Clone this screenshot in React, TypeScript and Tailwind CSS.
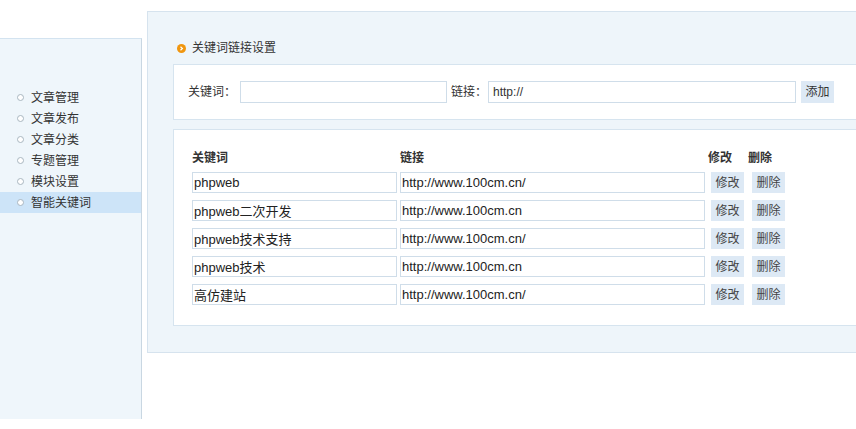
const menu = ["文章管理", "文章发布", "文章分类", "专题管理", "模块设置", "智能关键词"];

const rows = [
  { key: "phpweb", url: "http://www.100cm.cn/" },
  { key: "phpweb二次开发", url: "http://www.100cm.cn" },
  { key: "phpweb技术支持", url: "http://www.100cm.cn/" },
  { key: "phpweb技术", url: "http://www.100cm.cn" },
  { key: "高仿建站", url: "http://www.100cm.cn/" },
];

const font = "font-['Liberation_Sans','Noto_Sans_CJK_SC',sans-serif]";

function Dot() {
  return (
    <span className="flex h-[9px] w-[9px] items-center justify-center rounded-full bg-[#f0960f]">
      <svg width="5" height="5" viewBox="0 0 5 5">
        <path d="M1.5 0.8 L3.4 2.5 L1.5 4.2" stroke="#fff" strokeWidth="1.2" fill="none" />
      </svg>
    </span>
  );
}

export default function App() {
  return (
    <div className={`relative flex h-[429px] w-[856px] overflow-hidden bg-white text-[12px] text-[#333] ${font}`}>
      <aside className="mt-[38px] h-[381px] w-[142px] shrink-0 border-t border-r border-t-[#d3e3f0] border-r-[#c9d7e2] bg-[#eff6fb] pt-[48px]">
        <ul>
          {menu.map((m, i) => (
            <li
              key={m}
              className={`flex h-[21px] items-center gap-[7px] pl-[17px] ${
                i === menu.length - 1 ? "bg-[#cde4f8]" : ""
              }`}
            >
              <span className="h-[7px] w-[7px] rounded-full border border-[#a9b6c0] bg-white" />
              <span className="text-[12px] leading-none text-[#333]">{m}</span>
            </li>
          ))}
        </ul>
      </aside>

      <section className="mt-[11px] ml-[5px] h-[342px] w-[720px] shrink-0 border border-[#d6e3ee] bg-[#eef5fa] pt-[28px] pl-[25px]">
        <div className="flex h-[16px] items-center gap-[6px] pl-[4px]">
          <Dot />
          <span className="text-[12px] text-[#333]">关键词链接设置</span>
        </div>

        <div className="mt-[8px] flex h-[56px] items-center border border-[#d6e4ef] bg-white pl-[14px]">
          <span>关键词：</span>
          <input className="ml-[4px] h-[22px] w-[207px] border border-[#cfdde9] bg-white px-1 outline-none" />
          <span className="ml-[4px]">链接：</span>
          <input
            defaultValue="http://"
            className="ml-[1px] h-[22px] w-[308px] border border-[#cfdde9] bg-white px-[4px] text-[#333] outline-none"
          />
          <button className="ml-[5px] h-[22px] w-[33px] bg-[#dde9f5] text-[12px] text-[#333]">添加</button>
        </div>

        <div className="mt-[9px] h-[197px] border border-[#d6e4ef] bg-white pt-[21px] pl-[18px]">
          <div className="flex h-[14px] items-center font-bold text-[#333]">
            <span className="w-[208px]">关键词</span>
            <span className="w-[308px]">链接</span>
            <span className="w-[40px]">修改</span>
            <span>删除</span>
          </div>
          <div className="mt-[7px] flex flex-col gap-[7px]">
            {rows.map((r) => (
              <div key={r.key} className="flex h-[21px] items-center">
                <input
                  defaultValue={r.key}
                  className="h-[21px] w-[205px] border border-[#cfdde9] bg-white px-[1px] text-[13px] text-[#222] outline-none"
                />
                <input
                  defaultValue={r.url}
                  className="ml-[3px] h-[21px] w-[305px] border border-[#cfdde9] bg-white px-[1px] text-[13px] text-[#222] outline-none"
                />
                <button className="ml-[6px] h-[21px] w-[33px] bg-[#dde9f5] text-[12px] text-[#444]">修改</button>
                <button className="ml-[8px] h-[21px] w-[33px] bg-[#dde9f5] text-[12px] text-[#444]">删除</button>
              </div>
            ))}
          </div>
        </div>
      </section>
    </div>
  );
}
